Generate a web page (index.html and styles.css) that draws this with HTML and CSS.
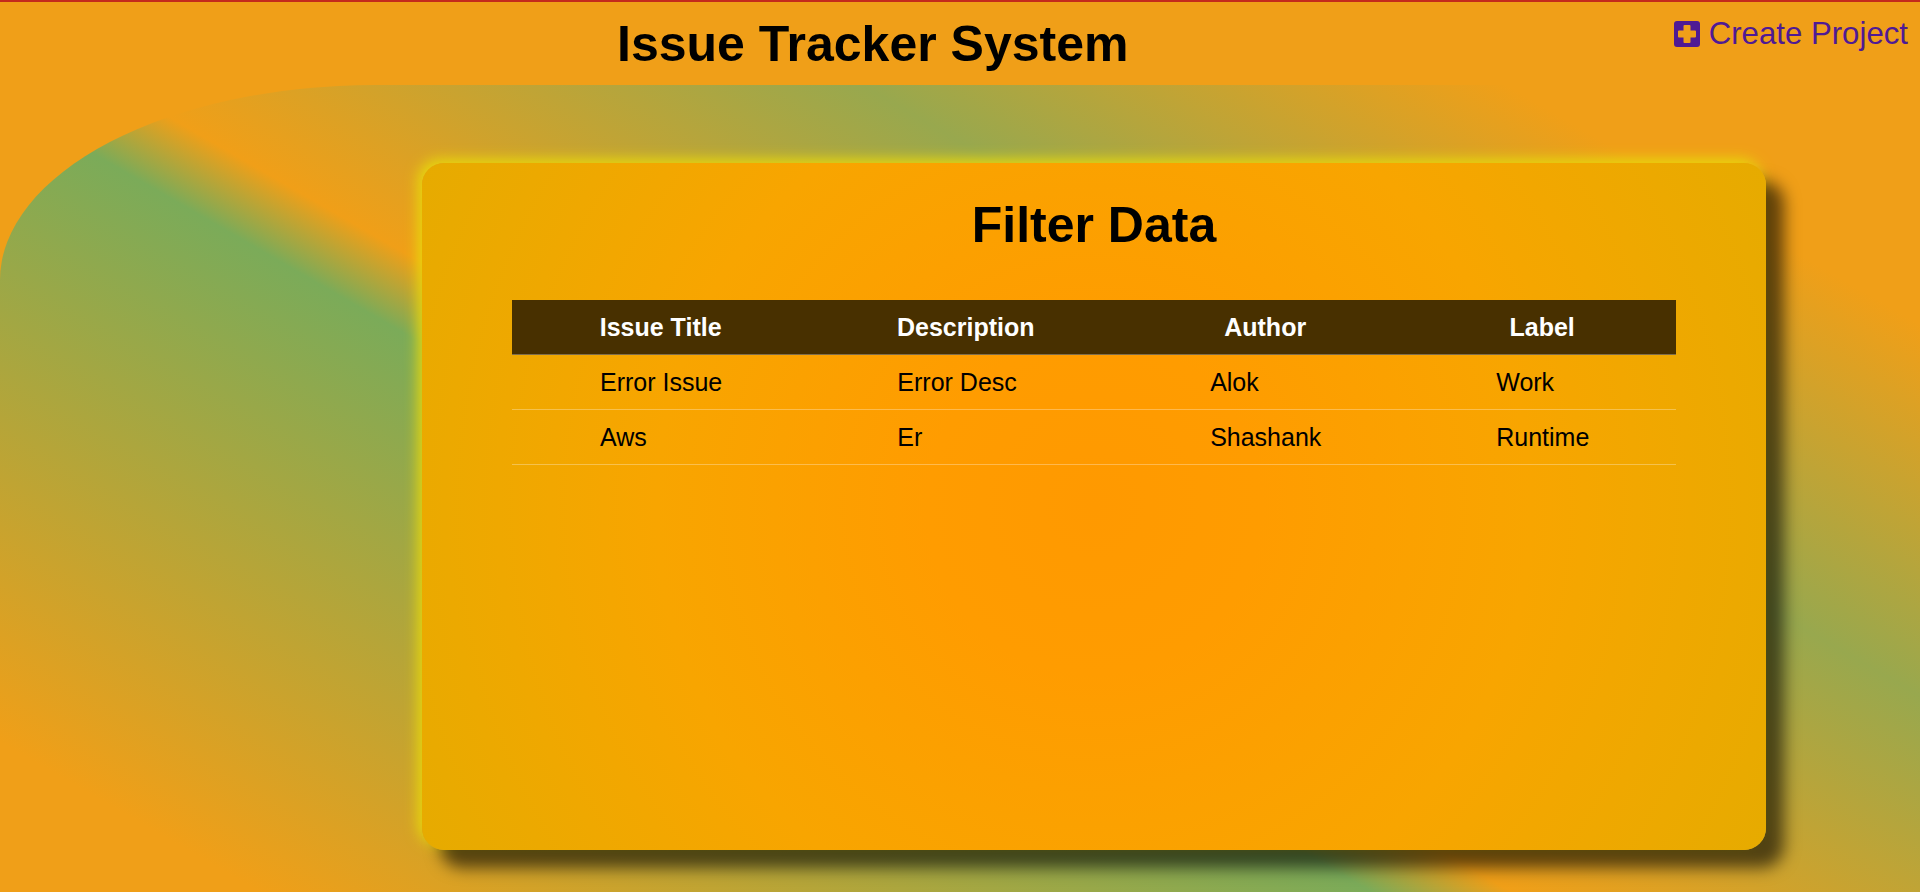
FILE: index.html
```html
<!DOCTYPE html>
<html lang="en">
<head>
    <meta charset="UTF-8">
    <meta name="viewport" content="width=device-width, initial-scale=1.0">
    <title>Issue Tracker System</title>
    <link rel="stylesheet" href="styles.css">
</head>
<body>
    <header class="topbar">
        <h1 class="site-title">Issue Tracker System</h1>
        <a class="create-link" href="#">
            <svg class="create-icon" viewBox="0 0 26 26" aria-hidden="true">
                <path fill-rule="evenodd" d="M3 0h20a3 3 0 0 1 3 3v20a3 3 0 0 1-3 3H3a3 3 0 0 1-3-3V3a3 3 0 0 1 3-3zM9.500 5v4.500H5a1 1 0 0 0-1 1v5a1 1 0 0 0 1 1h4.500V21a1 1 0 0 0 1 1h5a1 1 0 0 0 1-1v-4.500H21a1 1 0 0 0 1-1v-5a1 1 0 0 0-1-1h-4.500V5a1 1 0 0 0-1-1h-5a1 1 0 0 0-1 1z"/>
            </svg>
            Create Project
        </a>
    </header>
    <main class="stage">
        <section class="card">
            <h2 class="card-title">Filter Data</h2>
            <table class="issues">
                <thead>
                    <tr>
                        <th>Issue Title</th>
                        <th>Description</th>
                        <th>Author</th>
                        <th>Label</th>
                    </tr>
                </thead>
                <tbody>
                    <tr>
                        <td>Error Issue</td>
                        <td>Error Desc</td>
                        <td>Alok</td>
                        <td>Work</td>
                    </tr>
                    <tr>
                        <td>Aws</td>
                        <td>Er</td>
                        <td>Shashank</td>
                        <td>Runtime</td>
                    </tr>
                </tbody>
            </table>
        </section>
    </main>
</body>
</html>
```
FILE: styles.css
```css
* {
    box-sizing: border-box;
}
html, body {
    height: 100%;
}
body {
    margin: 0;
    border-top: 2px solid #c42a1c;
    background-color: #f09f18;
    font-family: "Liberation Sans", Arial, sans-serif;
    color: #000;
    overflow: hidden;
}
.topbar {
    height: 83px;
    display: flex;
    align-items: flex-start;
    justify-content: space-between;
    padding: 15px 12px 0 617px;
}
.site-title {
    margin: 0;
    font-size: 50px;
    line-height: 55px;
    font-weight: bold;
}
.create-link {
    display: flex;
    align-items: center;
    gap: 9px;
    font-size: 31.2px;
    line-height: 33px;
    color: #4f1a94;
    text-decoration: none;
}
.create-icon {
    width: 26px;
    height: 26px;
    fill: #4f1a94;
}
.stage {
    height: 807px;
    padding: 78px 0 0 422px;
    border-radius: 375px 0 0 0 / 195px 0 0 0;
    background: linear-gradient(210deg, #f09f18 207px, #98a84e 529px, #f09f18 903px, #7bab59 973px, #f09f18 1529px);
}
.card {
    width: 1344px;
    height: 687px;
    padding: 35px 90px 0;
    border-radius: 22px;
    background: radial-gradient(circle at center, #ff9900, #ff9c00 22%, #f8a500 58%, #e6ab00);
    box-shadow: 18px 18px 16px rgba(0, 0, 0, 0.6), -4px -4px 14px #e8d80c;
}
.card-title {
    margin: 0 0 47px;
    text-align: center;
    font-size: 50px;
    line-height: 55px;
    font-weight: bold;
}
.issues {
    width: 100%;
    border-collapse: collapse;
    font-size: 25px;
    line-height: 29px;
}
.issues th, .issues td {
    padding: 12.5px 85.5px;
    border-bottom: 1px solid rgba(255, 255, 255, 0.3);
}
.issues th {
    background-color: #483000;
    color: #fff;
    font-weight: bold;
    text-align: center;
}
.issues td {
    padding-left: 88px;
    padding-right: 83px;
    text-align: left;
}
```
